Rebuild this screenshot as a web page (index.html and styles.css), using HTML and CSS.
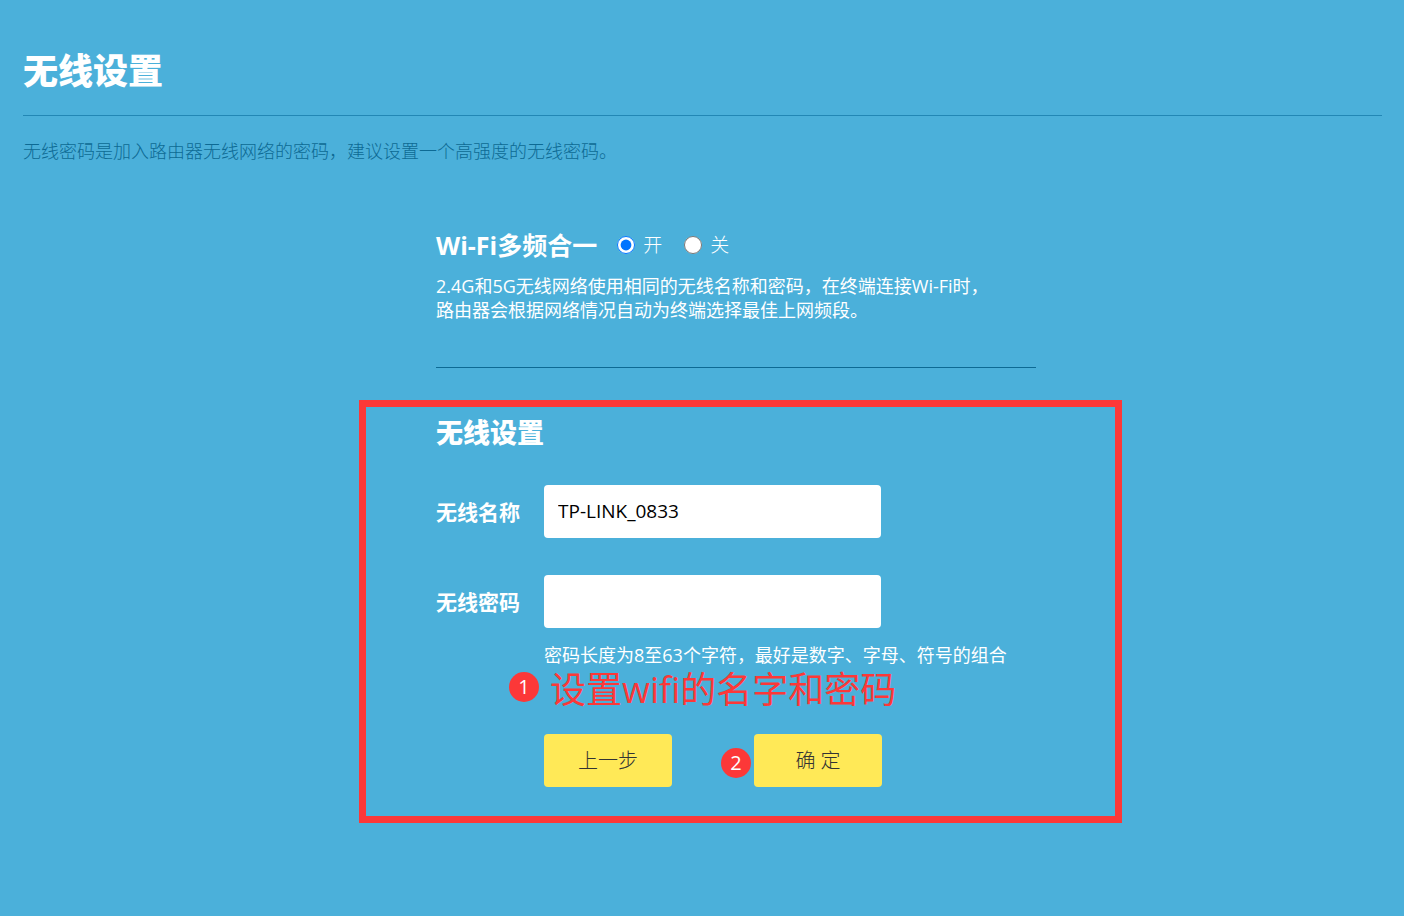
FILE: index.html
```html
<!DOCTYPE html>
<html lang="zh-CN">
<head>
<meta charset="utf-8">
<meta name="viewport" content="width=device-width, initial-scale=1">
<title>无线设置</title>
<link rel="stylesheet" href="styles.css">
</head>
<body>
<main class="page">
  <header class="page-header">
    <h1 class="page-title">无线设置</h1>
  </header>
  <p class="page-intro">无线密码是加入路由器无线网络的密码，建议设置一个高强度的无线密码。</p>
  <form class="setup">
    <section class="band">
      <fieldset class="band-switch">
        <legend class="band-title">Wi-Fi多频合一</legend>
        <label class="choice"><input class="radio" type="radio" name="band" checked>开</label>
        <label class="choice"><input class="radio" type="radio" name="band">关</label>
      </fieldset>
      <p class="band-note">2.4G和5G无线网络使用相同的无线名称和密码，在终端连接Wi-Fi时，<br>路由器会根据网络情况自动为终端选择最佳上网频段。</p>
    </section>
    <section class="wireless">
      <h2 class="section-title">无线设置</h2>
      <div class="field">
        <label class="field-label" for="ssid">无线名称</label>
        <input class="field-input" id="ssid" type="text" value="TP-LINK_0833">
      </div>
      <div class="field">
        <label class="field-label" for="key">无线密码</label>
        <input class="field-input" id="key" type="text" aria-describedby="key-hint">
      </div>
      <div class="follow">
        <p class="hint" id="key-hint">密码长度为8至63个字符，最好是数字、字母、符号的组合</p>
        <p class="step-note"><span class="step step-one">1</span>设置wifi的名字和密码</p>
        <div class="actions">
          <button class="button" type="button">上一步</button>
          <div class="action-marked">
            <span class="step step-two">2</span>
            <button class="button" type="button">确 定</button>
          </div>
        </div>
      </div>
    </section>
  </form>
</main>
</body>
</html>
```
FILE: styles.css
```css
* {
  box-sizing: border-box;
}

body {
  margin: 0;
  background: #4bb0da;
  color: #fff;
  font-family: "Open Sans", "Noto Sans CJK SC", sans-serif;
  font-size: 18px;
  line-height: 24px;
}

h1, h2, p {
  margin: 0;
}

.page {
  min-height: 100vh;
  padding: 47px 22px 48px 23px;
}

.page-header {
  padding-bottom: 20px;
  border-bottom: 1px solid #2287b5;
}

.page-title {
  font-size: 35px;
  font-weight: 900;
  line-height: 48px;
}

.page-intro {
  margin-top: 23px;
  color: #0d6a94;
  font-weight: 300;
}

.setup {
  width: 100%;
  max-width: 839px;
  margin: 67px auto 0;
  padding-left: 76px;
}

.band {
  margin: 0 86px 32px 77px;
  padding-bottom: 45px;
  border-bottom: 1px solid #0d6a94;
}

.band-switch {
  display: flex;
  align-items: center;
  margin: 0;
  padding: 0;
  border: 0;
}

.band-title {
  float: left;
  margin-right: 20px;
  padding: 0;
  font-size: 25px;
  font-weight: 700;
  line-height: 30px;
}

.choice {
  display: flex;
  align-items: center;
  gap: 8px;
  margin-right: 22px;
  font-size: 19px;
  font-weight: 300;
  line-height: 30px;
}

.radio {
  width: 18px;
  height: 18px;
  margin: 0;
}

.band-note {
  margin-top: 14px;
}

.wireless {
  padding: 8px 70px 29px;
  border: 7px solid #fc3838;
}

.section-title {
  margin-bottom: 34px;
  font-size: 27px;
  font-weight: 900;
  line-height: 36px;
}

.field {
  display: flex;
  align-items: center;
}

.field + .field {
  margin-top: 37px;
}

.field-label {
  width: 108px;
  font-size: 21px;
  font-weight: 700;
}

.field-input {
  width: 337px;
  height: 53px;
  padding: 0 14px 2px;
  border: 0;
  border-radius: 4px;
  background: #fff;
  color: #000;
  font: inherit;
  font-size: 19px;
}

.follow {
  padding: 15px 0 0 108px;
}

.hint {
  white-space: nowrap;
}

.step-note {
  position: relative;
  margin-top: 1px;
  padding-left: 6px;
  color: #fc3838;
  font-size: 36px;
  line-height: 44px;
}

.step {
  position: absolute;
  width: 30px;
  height: 30px;
  border-radius: 50%;
  background: #fc3838;
  color: #fff;
  font-size: 20px;
  line-height: 30px;
  text-align: center;
}

.step-one {
  top: 4px;
  left: -35px;
}

.step-two {
  top: 14px;
  left: -33px;
}

.actions {
  display: flex;
  gap: 82px;
  margin-top: 22px;
}

.action-marked {
  position: relative;
}

.button {
  display: block;
  width: 128px;
  height: 53px;
  padding: 0;
  border: 0;
  border-radius: 4px;
  background: #ffe957;
  color: #333;
  font: inherit;
  font-size: 20px;
  font-weight: 300;
}
```
